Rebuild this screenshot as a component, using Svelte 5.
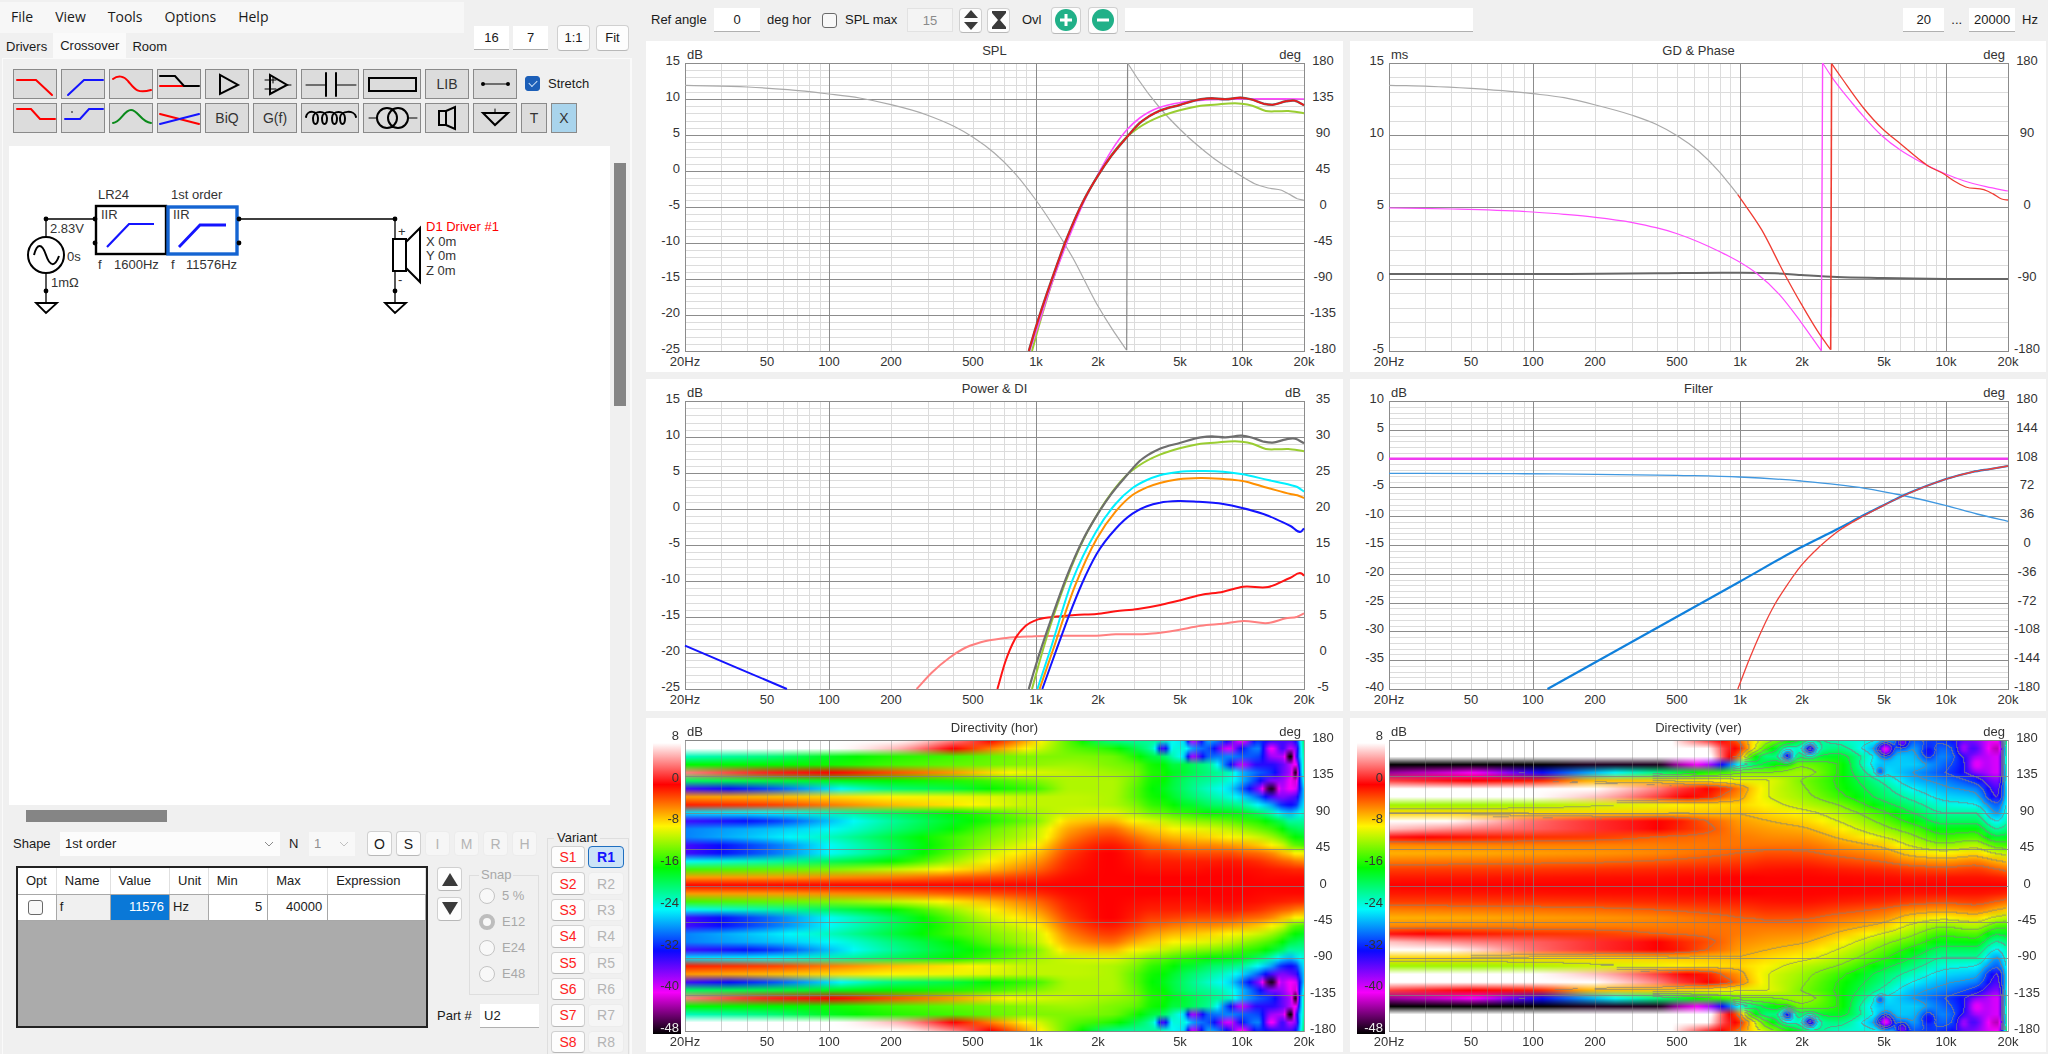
<script>
  const menus = ['File', 'View', 'Tools', 'Options', 'Help'];
  const tabs = ['Drivers', 'Crossover', 'Room'];
  const shapeButtons = ['O', 'S', 'I', 'M', 'R', 'H'];
  const variants = [1, 2, 3, 4, 5, 6, 7, 8];
  const snaps = ['5 %', 'E12', 'E24', 'E48'];

  const RED = '#f00', BLUE = '#1414ff', BLACK = '#000', GREEN = '#0a8a1a';
  const line = (d, color, width = 2) => ({ d, color, width });

  const toolRows = [
    [
      { name: 'Low pass', paths: [line('M4 11H23L39 26', RED)] },
      { name: 'High pass', paths: [line('M7 26L23 11H42', BLUE)] },
      { name: 'Band response', paths: [line('M4 10C9 6 15 7 19 12C25 19 27 25 42 21', RED)] },
      { name: 'Shelf pair', paths: [line('M3 17H26', RED), line('M3 7H18L27 17H42', BLACK)] },
      { name: 'Buffer', paths: [line('M15 6V25L33 16Z', BLACK)] },
      { name: 'Op amp', paths: [line('M17 6V25L34 16Z', BLACK), line('M34 16H38M12 11H23M12 20H23M20 8V14', BLACK, 1)] },
      { name: 'Capacitor', wide: true, paths: [line('M5 16H25M35 16H55', BLACK, 1), line('M25 4V27M35 4V27', BLACK, 2)] },
      { name: 'Resistor', wide: true, paths: [line('M6 9H53V22H6Z', BLACK, 2)] },
      { name: 'Library', text: 'LIB' },
      { name: 'Wire', paths: [line('M10 15H35', BLACK, 1), line('M10 15h0M35 15h0', BLACK, 4)] }
    ],
    [
      { name: 'High shelf', paths: [line('M4 6H18L27 16H42', RED)] },
      { name: 'Low shelf', paths: [line('M4 16H19L28 6H42', BLUE), line('M11 9h0', '#555', 2)] },
      { name: 'Peak', paths: [line('M4 20C12 19 15 7 22 7S32 19 42 20', GREEN)] },
      { name: 'All pass', paths: [line('M3 11L42 21', RED), line('M3 21L42 11', BLUE)] },
      { name: 'Biquad', text: 'BiQ' },
      { name: 'Function', text: 'G(f)' },
      { name: 'Inductor', wide: true, paths: [line('M5 14C6 7 17 7 17 15C17 23 12 23 12 15C12 7 26 7 26 15C26 23 21 23 21 15C21 7 36 7 36 15C36 23 31 23 31 15C31 7 44 7 44 15C44 23 39 23 39 15C39 7 54 7 55 14', BLACK)] },
      { name: 'Transformer', wide: true, paths: [line('M14 15a10 10 0 1 0 20 0a10 10 0 1 0 -20 0M25 15a10 10 0 1 0 20 0a10 10 0 1 0 -20 0', BLACK), line('M6 15H14M45 15H54', BLACK, 1)] },
      { name: 'Speaker', paths: [line('M14 8H21V22H14ZM21 8L30 4V26L21 22', BLACK)] },
      { name: 'Ground', paths: [line('M10 10H35L22 22Z', BLACK), line('M22 6V10', BLACK, 1)] },
      { name: 'Text', text: 'T', small: true },
      { name: 'Delete', text: 'X', small: true, active: true }
    ]
  ];

  // ---- traces: pixel pairs inside each chart's own extents [x0, y0, x1, y1] ----
  const pts = (s) => s.split(';').map((p) => p.split(',').map(Number));
  const shift = (list, dy) => list.map(([x, y]) => [x, y + dy]);

  const axial = pts('867,1054;882,985;918,840;949,725;988,605;1020,530;1050,470;1087,410;1114,370;1135,350;1159,333;1203,316;1250,299;1275,296;1305,299;1341,294;1365,300;1390,312;1410,315;1440,305;1460,303;1480,317');
  const listening = pts('874,1054;888,985;922,835;951,725;989,605;1020,529;1050,468;1087,410;1110,386;1159,351;1203,332;1250,318;1280,315;1341,312;1365,318;1395,334;1420,335;1445,334;1480,341');

  const degTicks = [180, 135, 90, 45, 0, -45, -90, -135, -180];

  const charts = [
    {
      title: 'SPL', leftUnit: 'dB', rightUnit: 'deg',
      left: [15, 10, 5, 0, -5, -10, -15, -20, -25], right: degTicks, minor: 40,
      ext: [101, 190, 1480, 1054],
      traces: [
        { c: '#aaa', w: 1.2, p: pts('101,257;240,262;330,270;421,283;490,295;560,315;640,346;700,380;742,412;790,460;832,515;881,598;920,675;963,770;1018,912;1055,993;1084,1050') },
        { c: '#888', w: 1.2, p: pts('1085,1052;1087,190') },
        { c: '#aaa', w: 1.2, p: pts('1087,190;1110,238;1159,325;1203,388;1240,434;1280,477;1305,500;1341,530;1370,552;1400,565;1430,572;1445,582;1465,597;1480,602') },
        { c: '#9acd32', w: 2, p: listening },
        { c: '#ff4dff', w: 1.6, p: pts('869,1054;886,985;921,840;953,725;990,605;1020,527;1050,455;1087,388;1114,355;1135,337;1159,323;1203,309;1260,301;1340,298;1480,298') },
        { c: '#666', w: 2.4, p: axial },
        { c: '#f01818', w: 1.6, p: axial }
      ]
    },
    {
      title: 'GD & Phase', leftUnit: 'ms', rightUnit: 'deg',
      left: [15, 10, 5, 0, -5], right: [180, 90, 0, -90, -180], minor: 20,
      ext: [100, 190, 1479, 1054],
      traces: [
        { c: '#666', w: 2, p: pts('100,823;500,823;700,821;860,819;960,821;1018,826;1098,832;1200,835;1340,838;1479,838') },
        { c: '#aaa', w: 1.2, p: pts('100,257;190,260;283,266;370,275;420,282;490,294;560,316;640,346;695,374;742,408;790,455;835,515;877,585') },
        { c: '#ff4dff', w: 1.2, p: pts('100,625;240,628;420,637;490,644;560,653;640,668;695,684;742,702;790,727;835,755;881,787;920,822;970,885;1018,968;1063,1053') },
        { c: '#ff4dff', w: 1.4, p: pts('1063,1053;1066,190') },
        { c: '#ff4dff', w: 1.2, p: pts('1066,190;1087,233;1130,307;1157,350;1198,408;1240,452;1280,484;1339,522;1380,543;1430,561;1479,574') },
        { c: '#f03c32', w: 1.3, p: pts('877,585;930,690;982,825;1018,912;1060,1005;1084,1050') },
        { c: '#f03c32', w: 1.6, p: pts('1084,1050;1086,192') },
        { c: '#f03c32', w: 1.3, p: pts('1086,192;1110,238;1157,325;1198,386;1240,433;1280,478;1300,498;1339,525;1360,545;1385,562;1425,570;1445,582;1465,598;1479,601') }
      ]
    },
    {
      title: 'Power & DI', leftUnit: 'dB', rightUnit: 'dB',
      left: [15, 10, 5, 0, -5, -10, -15, -20, -25], right: [35, 30, 25, 20, 15, 10, 5, 0, -5], minor: 40,
      ext: [101, 96, 1480, 960],
      traces: [
        { c: '#1414ff', w: 2, p: pts('101,830;328,960') },
        { c: '#ff8080', w: 2, p: pts('617,960;650,912;690,866;720,840;760,820;810,808;880,802;960,800;1018,800;1060,796;1130,795;1160,791;1200,783;1250,770;1300,764;1345,756;1400,762;1440,748;1465,743;1480,733') },
        { c: '#ff1414', w: 2, p: pts('797,960;815,877;835,813;860,770;882,754;920,744;970,738;1018,735;1060,727;1110,720;1160,708;1200,695;1250,678;1300,668;1345,653;1400,654;1450,626;1475,614;1480,620') },
        { c: '#00f0ff', w: 2, p: pts('886,960;913,850;963,638;1018,485;1060,405;1098,357;1130,333;1159,319;1200,309;1250,306;1300,308;1340,315;1400,333;1450,348;1465,354;1480,368') },
        { c: '#ff9000', w: 2, p: pts('891,960;919,850;970,650;1018,510;1060,428;1098,378;1130,355;1159,342;1200,331;1250,327;1300,330;1340,335;1400,357;1450,375;1465,379;1480,387') },
        { c: '#1414ff', w: 2, p: pts('897,960;925,855;955,745;985,645;1018,555;1060,480;1098,434;1130,412;1159,401;1200,396;1240,398;1300,405;1340,416;1400,440;1450,471;1475,486;1480,478') },
        { c: '#9acd32', w: 2, p: shift(listening, -94) },
        { c: '#6e6e6e', w: 2.2, p: shift(axial, -94) }
      ]
    },
    {
      title: 'Filter', leftUnit: 'dB', rightUnit: 'deg',
      left: [10, 5, 0, -5, -10, -15, -20, -25, -30, -35, -40],
      right: [180, 144, 108, 72, 36, 0, -36, -72, -108, -144, -180], minor: 50,
      ext: [100, 96, 1479, 960],
      traces: [
        { c: '#f03cf0', w: 2.4, p: pts('100,269;1479,269') },
        { c: '#4098e0', w: 1.3, p: pts('100,313;380,314;560,316;740,319;881,324;1018,336;1098,347;1160,358;1240,378;1339,409;1410,435;1479,457') },
        { c: '#1080dc', w: 2.2, p: pts('453,960;881,638;1018,535;1098,481;1157,439;1198,411;1240,383;1290,355;1339,331;1400,309;1440,300;1479,291') },
        { c: '#f04038', w: 1.3, p: pts('877,960;900,880;930,785;960,705;990,642;1018,590;1060,532;1098,489;1157,441;1198,412;1240,384;1290,355;1339,331;1400,309;1440,300;1479,291') }
      ]
    },
    {
      // each column: frequency, then levels in dB every 10 degrees from 0 to 180
      title: 'Directivity (hor)', leftUnit: 'dB', rightUnit: 'deg', left: [], right: degTicks, minor: 0,
      field: {
        columns: [
          [20, [0, -5, -14, -24, -34, -34, -28, -28, -34, -25, -1, -5, -34, -19, 4, -16, -22, 8, 8]],
          [50, [0, -5, -13, -21.5, -29, -29, -25, -26, -31, -24, -2, -6, -30, -18, 1, -16, -20, 8, 8]],
          [100, [0, -4.5, -12, -19, -24, -24, -22, -24, -26, -22, -4, -7, -25, -17, 0, -15.5, -17, 8, 8]],
          [200, [0, -4, -10, -16, -19, -19, -18, -20, -21, -19, -6, -8, -20, -16, -2.5, -14, -15, 6, 8]],
          [400, [0, -3, -7.5, -11, -13, -14, -14, -16, -17, -16, -7.5, -8.5, -18, -15, -5, -13, -14, 0, 4]],
          [600, [0, -2.5, -6, -8, -9.5, -11, -12, -13, -15, -14, -8.5, -9, -16, -14, -7, -12.5, -13, -4, 0]],
          [1000, [0, -1.5, -3.5, -5, -6.5, -8, -9.5, -10, -12, -11, -10, -10, -14, -12, -9, -11.5, -12, -9, -7]],
          [1500, [0, -0.3, -0.8, -1.2, -1.8, -2.8, -4, -5.2, -6.8, -9.5, -10, -10, -10.5, -10.5, -10, -11, -12, -13, -14]],
          [2300, [0, 0, 0, 0, 0, -0.8, -2, -3.5, -6, -9, -10.5, -10.5, -10.5, -10.5, -11, -12, -12.5, -15, -20]],
          [3000, [0, 0, -0.3, -0.6, -1, -2, -3.5, -5.5, -8, -10.5, -12, -13, -13, -12.5, -12, -13, -15, -18, -21]],
          [3700, [0, 0, -0.5, -1, -2, -3.3, -5, -6.8, -9, -12.5, -14.5, -15.5, -16, -15.5, -15, -15.5, -18, -22, -21]],
          [4150, [0, 0, -0.5, -1, -2, -3.5, -5.5, -7.2, -9.7, -13, -15, -16, -16.7, -16, -15.5, -16, -19, -34, -22]],
          [4700, [0, 0, -0.5, -1, -2.2, -4, -6, -8, -10.5, -14, -16, -17.5, -18.3, -18, -17, -18, -22, -23, -24]],
          [5200, [0, 0, -0.5, -1, -2.3, -4.2, -6.2, -8.2, -11, -14.5, -17, -18.5, -19.3, -19, -17.5, -18, -25, -23, -25]],
          [5800, [0, 0, -0.5, -1, -2.5, -4.5, -6.5, -8.5, -11.5, -15, -17.5, -19.5, -20.5, -20, -18.5, -19, -37, -27, -38]],
          [7000, [0, 0, -0.3, -1, -2.5, -4.5, -7, -9, -12, -16, -19, -21, -22.5, -21, -20, -21, -29, -30, -27]],
          [8700, [0, 0, -0.2, -0.8, -2.5, -5, -8, -10, -13, -16.5, -20, -23, -25, -23, -22, -31, -28, -39, -33]],
          [10000, [0, 0, -0.3, -1, -3, -5.5, -8.5, -11, -14, -17, -21, -25, -29, -26, -26, -38, -29, -32, -40]],
          [12000, [0, -0.2, -0.5, -1.5, -3.5, -6.5, -9.5, -12.5, -15, -19, -24, -29, -36, -31, -29, -33, -30, -28, -31]],
          [14000, [0, -0.3, -0.8, -2.3, -4.5, -8, -11, -14, -17, -22, -27, -34, -47, -36, -31, -33, -37, -40, -33]],
          [15800, [0, -0.3, -1, -3, -6, -9.5, -13, -16, -19, -25, -31, -36, -38, -37, -35, -35, -38, -34, -34]],
          [17300, [0, -0.3, -1.2, -3.5, -7, -12, -15, -18, -21, -26, -32, -35, -40, -40, -38, -38, -48, -38, -34]],
          [18300, [0, -0.3, -1.3, -4, -8, -13, -16, -18.5, -21, -25, -31, -34, -39, -41, -47, -40, -36, -36, -32]],
          [19300, [0, -0.3, -1.3, -4.3, -8, -13.5, -16.5, -19, -21, -24, -27, -29, -31, -30, -29, -28, -26, -26, -25]],
          [20000, [0, -0.3, -1.4, -4.5, -8.5, -14, -17, -19, -21, -23, -25, -26, -26, -24, -22, -22, -22, -21, -20]]
        ],
        spots: []
      }
    },
    {
      title: 'Directivity (ver)', leftUnit: 'dB', rightUnit: 'deg', left: [], right: degTicks, minor: 0,
      field: {
        contours: true,
        columns: [
          [20, [0, -0.8, -2, -4, -5.8, -4.5, 0.5, 6, 10, -7, -11, 9, 12, 2, -43, -48, 12, 12, 12]],
          [50, [0, -0.7, -1.9, -3.8, -5.6, -4.3, -0.7, 4, 7, -7, -11, 9, 12, 0, -40, -48, 12, 12, 12]],
          [100, [0, -0.6, -1.8, -3.6, -5.2, -4.2, -1.5, 3, 3.5, -7, -10.5, 8, 11, -1, -33, -48, 12, 12, 12]],
          [200, [0, -0.5, -1.6, -3.4, -4.9, -4.2, -2, 1.5, 1.5, -7, -9.5, 6, 8, -6, -26, -47, 12, 12, 12]],
          [400, [0, -0.4, -1.3, -2.9, -4.4, -4.1, -3, 0, 0, -6.7, -8.5, 2, 4, -6.5, -20, -47, 12, 12, 11]],
          [500, [0, -0.3, -1.2, -2.7, -4.1, -4, -3.2, -1, -0.7, -6.5, -8, 0.5, 2, -7, -18, -43, 12, 12, 7]],
          [700, [0, -0.2, -1.1, -2.4, -3.6, -3.9, -3.5, -2.5, -3, -6.4, -7.5, -1, 0, -7.5, -15, -38, 9, 8, 2]],
          [850, [0, -0.1, -1, -2.2, -3.3, -3.8, -3.7, -3.5, -4, -6.3, -7.2, -3.5, -1.8, -8, -14, -31, 2, 2, -0.5]],
          [1000, [0, 0, -0.9, -2, -3, -3.8, -4, -4.5, -5, -6.2, -7, -5, -4, -8.5, -12.5, -24, -4, -1, -3.5]],
          [1150, [0, 0, -0.8, -1.8, -2.9, -3.8, -4.2, -4.8, -5.5, -6.5, -7.5, -7, -6.5, -8.7, -12, -20, -14, -7, -7]],
          [1400, [0, -0.1, -0.6, -1.5, -2.6, -3.8, -4.5, -5.2, -6, -7.2, -8.2, -9, -9, -9, -12, -17, -20, -15, -11]],
          [2000, [0, -0.1, -0.5, -1.5, -2.7, -3.8, -4.7, -5.7, -6.9, -8.2, -10, -11, -11.5, -12, -11, -12.5, -19, -22, -18]],
          [3000, [0, -0.2, -0.9, -2.2, -3.6, -4.8, -6.2, -7.6, -9, -10.3, -12, -14, -15, -15.3, -15, -15, -17, -20, -22]],
          [5000, [0, -0.4, -1.4, -3.2, -4.8, -6.6, -9, -11.2, -12.8, -14.5, -17, -19, -20, -21.5, -24, -25.5, -25, -27, -24]],
          [7000, [0, -0.6, -2, -4.5, -7, -9.5, -11.5, -13.5, -16, -18, -20, -22, -24, -26, -27, -25.5, -26, -27, -29]],
          [10000, [0, -0.6, -2.4, -5, -8, -11.5, -14.2, -16.5, -19, -21, -23, -25, -26.5, -28, -30, -29, -28, -29, -31]],
          [14000, [0, -0.6, -2, -4.3, -7.2, -10.3, -13.5, -16.2, -19, -21, -24, -26, -28, -31, -34, -34, -35, -34, -36]],
          [18000, [0, -0.9, -3, -5.8, -9.4, -13.5, -17.5, -21, -24, -27, -29, -33, -34, -36, -39, -39, -39, -42, -40]],
          [20000, [0, -1.2, -3.6, -6.5, -10, -14, -17, -20, -22, -23, -24, -25, -25, -24, -23, -22, -22, -22, -20]]
        ],
        spots: [[645, 160, 7, -12], [682, 169, 7, -12], [804, 169, 8, -13], [831, 178, 7, -8], [795, 141, 5, -5], [873, 165, 9, -5], [930, 170, 7, -5], [950, 150, 9, -5]]
      }
    }
  ];

  let sizes = $state(charts.map(() => ({ w: 697, h: 331 })));

  // ---- axes ----
  const M = { left: 39, right: 39, top: 22, bottom: 21 };
  const freqLabels = [[20, '20Hz'], [50, '50'], [100, '100'], [200, '200'], [500, '500'], [1000, '1k'], [2000, '2k'], [5000, '5k'], [10000, '10k'], [20000, '20k']];
  const freqMinor = [30, 40, 50, 60, 70, 80, 90, 200, 300, 400, 500, 600, 700, 800, 900, 2000, 3000, 4000, 5000, 6000, 7000, 8000, 9000];
  const freqMajor = [100, 1000, 10000];
  const barLabels = [8, 0, -8, -16, -24, -32, -40, -48];
  const scale = [[255, 255, 255], [255, 0, 0], [255, 245, 0], [0, 250, 0], [0, 250, 250], [10, 10, 255], [245, 0, 250], [0, 0, 0]];

  const decades = (f) => Math.log10(f / 20) / 3;

  function geometry({ w, h }) {
    const pw = w - M.left - M.right;
    const ph = h - M.top - M.bottom;
    return {
      pw, ph,
      x: (f) => Math.round(M.left + decades(f) * pw),
      y: (i, n) => Math.round(M.top + (i / n) * ph)
    };
  }

  // Piecewise cubic through the points of a trace, with slopes weighted by spacing
  function curve(points, ext, g) {
    const q = points.map(([x, y]) => [
      M.left + ((x - ext[0]) / (ext[2] - ext[0])) * g.pw,
      M.top + ((y - ext[1]) / (ext[3] - ext[1])) * g.ph
    ]);
    const seg = (i) => (q[i + 1][1] - q[i][1]) / (q[i + 1][0] - q[i][0]);
    const last = q.length - 1;
    const slope = (i) => {
      if (i === 0) return seg(0);
      if (i === last) return seg(last - 1);
      const a = q[i][0] - q[i - 1][0], b = q[i + 1][0] - q[i][0];
      return (seg(i - 1) * b + seg(i) * a) / (a + b);
    };
    const n = (v) => v.toFixed(1);
    let d = `M${n(q[0][0])} ${n(q[0][1])}`;
    for (let i = 0; i < last; i++) {
      const [x0, y0] = q[i], [x1, y1] = q[i + 1];
      const k = (x1 - x0) / 3;
      d += `C${n(x0 + k)} ${n(y0 + slope(i) * k)} ${n(x1 - k)} ${n(y1 - slope(i + 1) * k)} ${n(x1)} ${n(y1)}`;
    }
    return d;
  }

  // ---- directivity maps ----
  // Monotone cubic interpolation
  function monotone(xs, ys) {
    const n = xs.length;
    const s = [];
    for (let i = 0; i < n - 1; i++) s.push((ys[i + 1] - ys[i]) / (xs[i + 1] - xs[i]));
    const m = [s[0]];
    for (let i = 1; i < n - 1; i++) m.push(s[i - 1] * s[i] <= 0 ? 0 : (2 * s[i - 1] * s[i]) / (s[i - 1] + s[i]));
    m.push(s[n - 2]);
    return (x) => {
      let i = 0;
      while (i < n - 2 && x > xs[i + 1]) i++;
      const h = xs[i + 1] - xs[i];
      const t = (x - xs[i]) / h;
      const t2 = t * t, t3 = t2 * t;
      return (2 * t3 - 3 * t2 + 1) * ys[i] + (t3 - 2 * t2 + t) * h * m[i] + (3 * t2 - 2 * t3) * ys[i + 1] + (t3 - t2) * h * m[i + 1];
    };
  }

  function colour(db) {
    const p = Math.min(6.999, Math.max(0, (8 - db) / 8));
    const i = Math.floor(p), t = p - i;
    return scale[i].map((c, k) => c + (scale[i + 1][k] - c) * t);
  }

  // Colours are blended between the measured angles, 10 degrees apart
  function paint(canvas, field) {
    const W = canvas.width, H = canvas.height;
    const ctx = canvas.getContext('2d');
    const img = ctx.createImageData(W, H);
    const xs = field.columns.map(([f]) => decades(f));
    const rows = [];
    for (let a = 0; a < 19; a++) {
      const fn = monotone(xs, field.columns.map(([, v]) => v[a]));
      rows.push(Float32Array.from({ length: W }, (_, x) => fn(x / (W - 1))));
    }
    const values = new Float32Array(W * H);
    const steep = new Uint8Array(W * H);
    for (let y = 0; y < H; y++) {
      const angle = Math.abs(180 - (y / (H - 1)) * 360);
      const i = Math.min(17, Math.floor(angle / 10));
      const t = angle / 10 - i;
      for (let x = 0; x < W; x++) {
        let extra = 0;
        for (const [su, sa, r, db] of field.spots) {
          const dx = (x / (W - 1) - su / 1000) * 619;
          const dy = (angle - sa) * 0.8;
          const k = (dx * dx + dy * dy) / (r * r);
          if (k < 6) extra += db * Math.exp(-k * 1.2);
        }
        const a = rows[i][x] + extra, b = rows[i + 1][x] + extra;
        const k = y * W + x;
        values[k] = a + (b - a) * t;
        steep[k] = Math.abs(a - b) > 14 ? 1 : 0;
        const ca = colour(a), cb = colour(b);
        img.data.set([0, 1, 2].map((c) => ca[c] + (cb[c] - ca[c]) * t).concat(255), k * 4);
      }
    }
    if (field.contours) {
      for (let y = 0; y < H - 1; y++) {
        for (let x = 0; x < W - 1; x++) {
          const k = y * W + x;
          const v = values[k];
          if (v > -1 || v < -35 || steep[k]) continue;
          const band = Math.floor(v / 3);
          if (band !== Math.floor(values[k + 1] / 3) || band !== Math.floor(values[k + W] / 3)) {
            for (let c = 0; c < 3; c++) img.data[k * 4 + c] = img.data[k * 4 + c] * 0.3 + 90;
          }
        }
      }
    }
    ctx.putImageData(img, 0, 0);
  }
</script>

<main>
  <section class="editor">
    <header>
      <div class="heads">
        <nav class="menu">
          {#each menus as m}<button>{m}</button>{/each}
        </nav>
        <div class="tabs" role="tablist">
          {#each tabs as t}<button role="tab" aria-selected={t === 'Crossover'} class:on={t === 'Crossover'}>{t}</button>{/each}
        </div>
      </div>
      <div class="zoom">
        <input aria-label="Columns" value="16" />
        <input aria-label="Rows" value="7" />
        <button class="btn">1:1</button>
        <button class="btn">Fit</button>
      </div>
    </header>

    <div class="page">
      <div class="tools">
        {#each toolRows as row, r}
          <div class="toolrow">
            {#each row as t}
              <button class="tool" class:wide={t.wide} class:small={t.small} class:active={t.active} aria-label={t.name}>
                {#if t.text}{t.text}{:else}
                  <svg width={t.wide ? 58 : 44} height="30" fill="none" stroke-linecap="round">
                    {#each t.paths as p}<path d={p.d} stroke={p.color} stroke-width={p.width} />{/each}
                  </svg>
                {/if}
              </button>
            {/each}
            {#if r === 0}
              <label class="check stretch"><input type="checkbox" checked />Stretch</label>
            {/if}
          </div>
        {/each}
      </div>

      <div class="board">
        <svg class="schematic" fill="none" stroke="#000">
          <g stroke-width="1.3">
            <path d="M46 236V219H95M239 219H395V239M46 274V303M395 271V303" />
          </g>
          <g stroke-width="2">
            <circle cx="46" cy="255" r="18" />
            <path d="M34 255C37 243 42 243 46 255S55 267 59 256" />
            <path d="M36 303H57L46 313ZM385 303H406L395 313Z" stroke-width="1.8" />
            <rect x="393" y="239" width="13" height="32" />
            <path d="M406 242L420 228V282L406 268" />
            <rect x="96" y="206" width="70" height="48" stroke-width="2.4" />
            <path d="M107 247L129 224H154" stroke="#1414ff" stroke-width="2.2" />
          </g>
          <rect x="168" y="207" width="69" height="47" stroke="#1464d2" stroke-width="3.4" />
          <path d="M179 247L200 225H226" stroke="#1414ff" stroke-width="2.8" />
          <g fill="#000" stroke="none">
            {#each [[46, 219], [95, 219], [95, 243], [239, 219], [239, 243], [395, 219], [46, 291], [395, 291]] as [x, y]}
              <circle cx={x} cy={y} r="2.4" />
            {/each}
          </g>
          <g class="parts" stroke="none">
            <text x="98" y="199">LR24</text>
            <text x="171" y="199">1st order</text>
            <text x="101" y="219">IIR</text>
            <text x="173" y="219">IIR</text>
            <text x="98" y="269">f</text>
            <text x="114" y="269">1600Hz</text>
            <text x="171" y="269">f</text>
            <text x="186" y="269">11576Hz</text>
            <text x="50" y="233">2.83V</text>
            <text x="67" y="261">0s</text>
            <text x="51" y="287">1mΩ</text>
            <text x="398" y="236">+</text>
            <text x="398" y="284">-</text>
            <text class="red" x="426" y="231">D1 Driver #1</text>
            <text x="426" y="246">X 0m</text>
            <text x="426" y="260">Y 0m</text>
            <text x="426" y="275">Z 0m</text>
          </g>
        </svg>
        <div class="vbar"><i></i></div>
      </div>
      <div class="hbar"><i></i></div>

      <div class="lower">
        <div class="params">
          <div class="shaperow">
            <label for="shape">Shape</label>
            <select id="shape"><option>1st order</option></select>
            <label for="order">N</label>
            <select id="order" disabled><option>1</option></select>
            <div class="letters">
              {#each shapeButtons as b, i}<button class="btn" disabled={i > 1}>{b}</button>{/each}
            </div>
          </div>
          <div class="detail">
            <div class="gridbox">
              <table>
                <colgroup><col style:width="9.4%" /><col style:width="13.2%" /><col style:width="14.6%" /><col style:width="9.5%" /><col style:width="14.6%" /><col style:width="14.7%" /><col /></colgroup>
                <thead>
                  <tr><th>Opt</th><th>Name</th><th>Value</th><th>Unit</th><th>Min</th><th>Max</th><th>Expression</th></tr>
                </thead>
                <tbody>
                  <tr>
                    <td class="mid"><input type="checkbox" aria-label="Optimise f" /></td>
                    <td class="fixed">f</td><td class="num sel">11576</td><td class="fixed">Hz</td>
                    <td class="num">5</td><td class="num">40000</td><td></td>
                  </tr>
                </tbody>
              </table>
            </div>
            <div class="side">
              <div class="sidetop">
                <div class="arrows">
                  <button class="btn" aria-label="Increase"><svg width="16" height="14"><path d="M8 1L16 14H0Z" /></svg></button>
                  <button class="btn" aria-label="Decrease"><svg width="16" height="14"><path d="M8 13L16 0H0Z" /></svg></button>
                </div>
                <fieldset class="snap" disabled>
                  <legend>Snap</legend>
                  {#each snaps as s}
                    <label><input type="radio" name="snap" checked={s === 'E12'} />{s}</label>
                  {/each}
                </fieldset>
              </div>
              <div class="part"><label for="part">Part #</label><input id="part" value="U2" /></div>
            </div>
          </div>
        </div>
        <fieldset class="variant">
          <legend>Variant</legend>
          <div class="pairs">
            {#each variants as v}
              <button class="btn store">S{v}</button>
              <button class="btn recall" class:current={v === 1} disabled={v > 1}>R{v}</button>
            {/each}
          </div>
        </fieldset>
      </div>
    </div>
  </section>

  <section class="results">
    <div class="topbar">
      <label for="ref">Ref angle</label>
      <input id="ref" class="num46" value="0" />
      <span class="deghor">deg hor</span>
      <label class="check"><input type="checkbox" />SPL max</label>
      <input class="num46 spl" aria-label="SPL max value" value="15" disabled />
      <button class="btn icon" aria-label="Expand scale"><svg width="14" height="22"><path d="M7 1L14 9H0ZM7 21L14 13H0Z" /></svg></button>
      <button class="btn icon" aria-label="Compress scale"><svg width="14" height="22"><path d="M0 2H14V4L8 11L14 18V20H0V18L6 11L0 4Z" /></svg></button>
      <span class="ovl">Ovl</span>
      <button class="btn round" aria-label="Add overlay"><svg width="24" height="24"><circle cx="12" cy="12" r="11" /><path d="M12 6V18M6 12H18" /></svg></button>
      <button class="btn round" aria-label="Remove overlay"><svg width="24" height="24"><circle cx="12" cy="12" r="11" /><path d="M6 12H18" /></svg></button>
      <input class="note" aria-label="Overlay name" />
      <input class="fmin" aria-label="Minimum frequency" value="20" />
      <span>...</span>
      <input class="num46" aria-label="Maximum frequency" value="20000" />
      <span>Hz</span>
    </div>

    <div class="charts">
      {#each charts as chart, i}
        {@const g = geometry(sizes[i])}
        {@const rowsL = chart.left.length - 1}
        {@const rowsR = chart.right.length - 1}
        {@const x1 = M.left + g.pw}
        {@const y1 = M.top + g.ph}
        <figure bind:clientWidth={sizes[i].w} bind:clientHeight={sizes[i].h}>
          {#if chart.field}<canvas width="619" height="290" use:paint={chart.field}></canvas>{/if}
          <svg class:overmap={chart.field} role="img" aria-label={chart.title}>
            {#if chart.field}
              <defs>
                <linearGradient id="bar{i}" x1="0" y1="0" x2="0" y2="1">
                  {#each scale as c, k}<stop offset={k / 7} stop-color="rgb({c.join(',')})" />{/each}
                </linearGradient>
              </defs>
              <rect x="7" y={M.top + 3} width="28" height={g.ph} fill="url(#bar{i})" />
              {#each barLabels as b, k}
                <text class:light={b === -48} x="33" y={M.top + (k / 7) * (g.ph + 1)} text-anchor="end">{b}</text>
              {/each}
            {/if}
            <g class="minor">
              {#each freqMinor as f}<line x1={g.x(f)} x2={g.x(f)} y1={M.top} y2={y1} />{/each}
              {#each { length: chart.minor } as _, k}<line x1={M.left} x2={x1} y1={g.y(k, chart.minor)} y2={g.y(k, chart.minor)} />{/each}
            </g>
            <g class="major">
              {#each freqMajor as f}<line x1={g.x(f)} x2={g.x(f)} y1={M.top} y2={y1} />{/each}
              {#each chart.field ? chart.right : chart.left as _, k}
                {@const y = g.y(k, chart.field ? rowsR : rowsL)}
                <line x1={M.left} x2={x1} y1={y} y2={y} />
              {/each}
              <rect x={M.left} y={M.top} width={g.pw} height={g.ph} fill="none" />
            </g>
            {#each chart.traces ?? [] as t}
              <path d={curve(t.p, chart.ext, g)} stroke={t.c} stroke-width={t.w} fill="none" />
            {/each}
            <text x={M.left + g.pw / 2} y="14" text-anchor="middle">{chart.title}</text>
            <text x={M.left + 2} y="18">{chart.leftUnit}</text>
            <text x={x1 - 3} y="18" text-anchor="end">{chart.rightUnit}</text>
            {#each chart.left as v, k}<text x={M.left - 5} y={g.y(k, rowsL) + 2} text-anchor="end">{v}</text>{/each}
            {#each chart.right as v, k}<text x={x1 + 19} y={g.y(k, rowsR) + 2} text-anchor="middle">{v}</text>{/each}
            {#each freqLabels as [f, s]}<text x={g.x(f)} y={y1 + 15} text-anchor="middle">{s}</text>{/each}
          </svg>
        </figure>
      {/each}
    </div>
  </section>
</main>

<style>
  :global(body) { background: #f0f0f0; }
  :global(*) { box-sizing: border-box; }
  main {
    display: grid;
    grid-template-columns: minmax(640px, 646fr) minmax(0, 1402fr);
    height: 100vh;
    overflow: hidden;
    background: #f0f0f0;
    color: #1a1a1a;
    font: 13px/16px "Liberation Sans", Arial, sans-serif;
  }
  button, input, select { font: inherit; color: inherit; margin: 0; }
  button { padding: 0; border: 0; background: none; }
  input:not([type]) {
    height: 24px; border: 0; border-bottom: 1px solid #b0b0b0; background: #fff; text-align: center; padding: 0; min-width: 0;
  }
  .btn {
    display: flex; align-items: center; justify-content: center;
    border: 1px solid #d0d0d0; border-bottom-color: #b8b8b8; border-radius: 4px; background: #fdfdfd;
  }
  .btn:disabled { color: #b4b4b4; background: #f6f6f6; border-color: #ececec; }

  .editor { display: flex; flex-direction: column; min-height: 0; }
  header { display: flex; height: 58px; }
  .heads { width: 464px; }
  .menu { display: flex; gap: 22px; height: 31px; padding: 0 0 2px 11px; margin-top: 2px; background: #f7f7f7; font: 14px/28px "Open Sans", sans-serif; }
  .tabs { display: flex; height: 25px; align-items: flex-end; }
  .tabs button { height: 22px; padding: 0 6px; }
  .tabs .on { height: 25px; background: #fafafa; padding: 0 7px; }
  .zoom { display: flex; gap: 4px; padding: 25px 0 0 10px; }
  .zoom input { width: 35px; margin-top: 1px; }
  .zoom .btn { width: 33px; height: 26px; margin-left: 5px; }
  .zoom .btn + .btn { margin-left: 2px; }

  .page { flex: 1; min-height: 0; display: flex; flex-direction: column; margin: 0 14px 0 2px; border: 1px solid #fafafa; border-width: 1px 2px 0 1px; }
  .tools { display: flex; flex-direction: column; gap: 4px; padding: 10px 0 13px 10px; }
  .toolrow { display: flex; gap: 4px; height: 30px; }
  .tool { width: 44px; border: 1px solid #8a8a8a; background: #dcdcdc; color: #333; font-size: 14px; flex: none; display: grid; place-items: center; overflow: hidden; }
  .tool svg { margin: -1px; }
  .wide { width: 58px; }
  .small { width: 26px; }
  .active { background: #a9d4ec; }
  .check { display: flex; align-items: center; gap: 8px; }
  input[type="checkbox"] { appearance: none; width: 15px; height: 15px; border: 1px solid #6a6a6a; border-radius: 3px; background: #f8f8f8; display: grid; place-items: center; }
  input[type="checkbox"]:checked { background: #1c5fb8; border-color: #1c5fb8; }
  input[type="checkbox"]:checked::after { content: ''; width: 7px; height: 4px; border: solid #cfe4fa; border-width: 0 0 1px 1px; rotate: -45deg; margin-bottom: 2px; }
  .stretch { padding: 0 0 1px 4px; }

  .board { flex: 1; min-height: 0; display: flex; margin-left: 6px; }
  .schematic { flex: 1; height: 100%; background: #fff; min-width: 0; }
  .schematic > * { transform: translate(-9px, -146px); }
  .parts { font-size: 13px; fill: #333; }
  .red { fill: #f00; }
  .vbar { width: 20px; padding: 17px 4px 0 4px; }
  .vbar i { display: block; height: 243px; background: #858585; }
  .hbar { height: 17px; padding: 5px 0 0 23px; }
  .hbar i { display: block; width: 141px; height: 12px; background: #858585; }

  .lower { display: flex; gap: 8px; height: 232px; overflow: hidden; padding-left: 10px; }
  .params { width: 526px; padding-top: 9px; }
  .shaperow { display: flex; align-items: center; height: 25px; }
  .shaperow label { width: 47px; }
  .shaperow label[for="order"] { width: 20px; margin-left: 9px; }
  select {
    --a: #8a8a8a;
    appearance: none; height: 24px; border: 0; padding: 0 5px; background: #fcfcfc;
    background-image: linear-gradient(45deg, transparent 45%, var(--a) 45% 60%, transparent 60%), linear-gradient(-45deg, transparent 45%, var(--a) 45% 60%, transparent 60%);
    background-size: 4px 4px; background-repeat: no-repeat;
    background-position: right 11px center, right 7px center;
  }
  #shape { width: 220px; }
  #order { width: 46px; color: #909090; background-color: #f8f8f8; opacity: 1; --a: #c0c0c0; }
  .letters { display: flex; gap: 4px; margin-left: 12px; }
  .letters .btn { width: 25px; height: 25px; font-size: 14px; }
  .detail { display: flex; margin: 10px 0 0 3px; gap: 9px; }
  .gridbox { width: 412px; height: 162px; border: 2px solid #222; background: #ababab; }
  table { width: 100%; table-layout: fixed; border-collapse: collapse; background: #fff; }
  th { font-weight: 400; height: 26px; text-align: left; padding: 0 0 0 8px; border-right: 1px solid #e0e0e0; border-bottom: 1px solid #a8a8a8; }
  td { height: 26px; padding: 0 5px 0 3px; border-right: 1px solid #a8a8a8; border-bottom: 1px solid #a8a8a8; }
  .num { text-align: right; }
  .fixed { background: #f0f0f0; }
  .sel { background: #0a78d7; color: #fff; }
  .mid input { margin: 0 auto; }
  .side { display: flex; flex-direction: column; justify-content: space-between; width: 102px; padding-top: 1px; }
  .sidetop { display: flex; justify-content: space-between; }
  .arrows { display: flex; flex-direction: column; gap: 6px; }
  .arrows .btn { width: 25px; height: 24px; }
  .arrows svg, .icon svg { fill: #3a3a3a; }
  fieldset { border: 1px solid #dedede; margin: 0; padding: 0; min-width: 0; }
  .snap { width: 70px; height: 128px; color: #a8a8a8; padding: 0 0 0 9px; }
  .snap legend { padding: 0 2px; }
  .snap label { display: flex; align-items: center; gap: 7px; height: 26px; }
  input[type="radio"] { appearance: none; width: 16px; height: 16px; border: 1px solid #c4c4c4; border-radius: 50%; background: #f8f8f8; }
  input[type="radio"]:checked { border: 4px solid #bdbdbd; }
  .part { display: flex; align-items: center; justify-content: space-between; }
  .part input { width: 59px; text-align: left; padding-left: 4px; }
  .variant { width: 82px; height: 260px; margin-top: 8px; padding: 0 3px; }
  .variant legend { margin-left: 3px; padding: 0 3px; }
  .pairs { display: grid; grid-template: repeat(8, 1fr) / 34px 36px; height: 207px; gap: 4px 3px; }
  .pairs .btn { font-size: 14px; line-height: 14px; min-height: 0; }
  .store { color: #f22; }
  .pairs .current { background: #cbe3f7; border-color: #1f6fc0; color: #1414ff; font-weight: 700; }

  .results { display: flex; flex-direction: column; min-width: 0; min-height: 0; padding: 0 2px 2px 0; }
  .topbar { display: flex; align-items: center; height: 41px; padding: 0 8px 1px 5px; flex: none; white-space: nowrap; }
  .num46 { width: 46px; }
  .topbar label[for="ref"] { width: 63px; }
  .deghor { width: 62px; padding-left: 7px; }
  .spl { margin-left: 8px; }
  .topbar .spl:disabled { background: #f4f4f4; color: #8a8a8a; border: 1px solid #e2e2e2; }
  .topbar .check { width: 77px; }
  .icon { width: 23px; height: 25px; margin-left: 5px; flex: none; }
  .spl + .icon { margin-left: 6px; }
  .ovl { width: 41px; padding-left: 12px; }
  .round { width: 30px; height: 27px; margin-right: 7px; flex: none; }
  .round circle { fill: #20b088; }
  .round path { stroke: #fff; stroke-width: 3; fill: none; }
  .note { width: 348px; margin-right: auto; }
  .topbar .note { text-align: left; }
  .fmin { width: 41px; }
  .topbar .fmin ~ span { padding: 0 7px; }
  .topbar .fmin ~ span:last-child { padding-right: 0; }

  .charts { flex: 1; min-height: 0; display: grid; grid-template: 331fr 331fr 334fr / 1fr 1fr; gap: 7px; }
  figure { margin: 0; min-width: 0; min-height: 0; display: grid; background: #fff; overflow: hidden; }
  figure > * { grid-area: 1 / 1; }
  figure svg { width: 100%; height: 100%; min-height: 0; }
  figure canvas { width: calc(100% - 78px); height: calc(100% - 43px); margin: 22px 39px 21px; min-height: 0; }
  figure text { font-size: 13px; fill: #333; }
  figure .light { fill: #eee; }
  .minor, .major { shape-rendering: crispEdges; }
  .minor { stroke: #dcdcdc; }
  .major { stroke: #8c8c8c; }
  .overmap .minor { stroke: rgba(128, 128, 128, .38); }
  .overmap .major { stroke: rgba(128, 128, 128, .75); }
</style>
